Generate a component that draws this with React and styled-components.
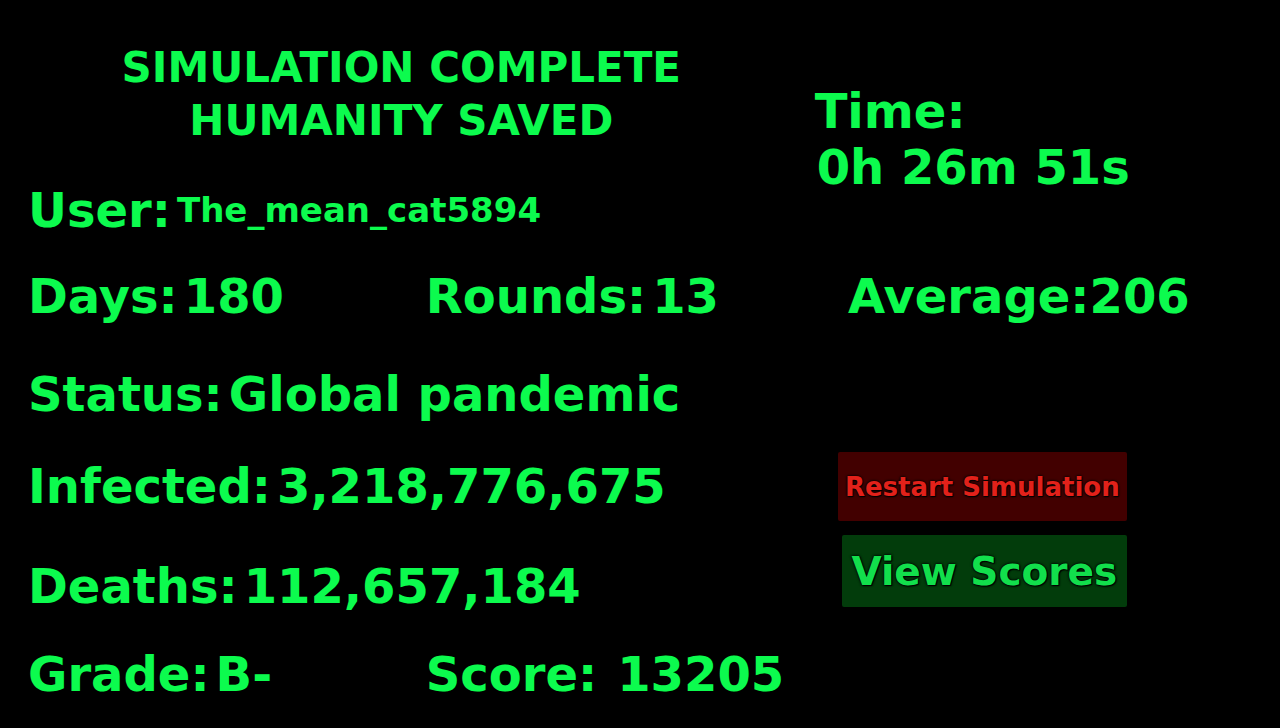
import React from "react";
import styled, { createGlobalStyle } from "styled-components";

const App = () => {
	return (
		<>
			<GlobalStyle />
			<Page>
				<Top>
					<div>
						<Title>
							SIMULATION COMPLETE
							<br />
							HUMANITY SAVED
						</Title>
						<User>
							<Stat>
								<Label>User:</Label>
								<UserName>The_mean_cat5894</UserName>
							</Stat>
						</User>
					</div>
					<Time>
						<div>Time:</div>
						<TimeValue>0h 26m 51s</TimeValue>
					</Time>
				</Top>
				<Stats $top={30}>
					<Stat>
						<Label>Days:</Label>
						<Value>180</Value>
					</Stat>
					<Stat>
						<Label>Rounds:</Label>
						<Value>13</Value>
					</Stat>
					<Stat $gap={0}>
						<Label>Average:</Label>
						<Value>206</Value>
					</Stat>
				</Stats>
				<Bottom>
					<Results>
						<Stat>
							<Label>Status:</Label>
							<Value>Global pandemic</Value>
						</Stat>
						<Stat $top={36}>
							<Label>Infected:</Label>
							<Value>3,218,776,675</Value>
						</Stat>
						<Stat $top={44}>
							<Label>Deaths:</Label>
							<Value>112,657,184</Value>
						</Stat>
					</Results>
					<Actions>
						<RestartButton type="button">Restart Simulation</RestartButton>
						<ScoresButton type="button">View Scores</ScoresButton>
					</Actions>
				</Bottom>
				<Stats $top={32}>
					<Stat>
						<Label>Grade:</Label>
						<Value>B-</Value>
					</Stat>
					<Stat $gap={20}>
						<Label>Score:</Label>
						<Value>13205</Value>
					</Stat>
				</Stats>
			</Page>
		</>
	);
};

export default App;

const GlobalStyle = createGlobalStyle`
	* {
		box-sizing: border-box;
	}
	body {
		margin: 0;
		background-color: #000000;
	}
`;

const Page = styled.main`
	padding: 41px 28px 20px 28px;
	color: #0cfb4e;
	font-family: "DejaVu Sans", sans-serif;
	font-size: 48px;
	font-weight: 700;
	line-height: 56px;
	white-space: nowrap;
`;

const Top = styled.header`
	display: grid;
	grid-template-columns: 61% 1fr;
	column-gap: 40px;
`;

const Title = styled.h1`
	margin: 0;
	font-size: 42px;
	line-height: 53px;
	text-align: center;
`;

const User = styled.dl`
	margin: 35px 0 0;
`;

const Time = styled.div`
	padding-top: 42px;
`;

const TimeValue = styled.div`
	padding-left: 2px;
`;

const Stats = styled.dl`
	display: grid;
	grid-template-columns: 32.5% 34.5% 1fr;
	margin: ${(props) => props.$top}px 0 0;
`;

const Stat = styled.div`
	display: flex;
	align-items: center;
	column-gap: ${(props) => props.$gap ?? 6}px;
	margin-top: ${(props) => props.$top || 0}px;
`;

const Label = styled.dt``;

const Value = styled.dd`
	margin: 0;
`;

const UserName = styled(Value)`
	font-size: 34px;
`;

const Bottom = styled.section`
	display: grid;
	grid-template-columns: 66% 1fr;
	margin-top: 42px;
`;

const Results = styled.dl`
	margin: 0;
`;

const Actions = styled.div`
	display: flex;
	flex-direction: column;
	align-items: flex-end;
	justify-self: start;
	row-gap: 14px;
	padding: 86px 0 0 2px;
`;

const Button = styled.button`
	padding: 0 4px;
	border: 0;
	border-radius: 2px;
	font-family: inherit;
	font-weight: 700;
	text-shadow: 0 0 3px #000000, 0 0 2px #000000, 1px 1px 1px #000000;
	cursor: pointer;
`;

const RestartButton = styled(Button)`
	width: 289px;
	height: 69px;
	background-color: #420000;
	color: #e2211a;
	font-size: 26px;
`;

const ScoresButton = styled(Button)`
	width: 285px;
	height: 72px;
	background-color: #023c0b;
	color: #12df4c;
	font-size: 39px;
`;
